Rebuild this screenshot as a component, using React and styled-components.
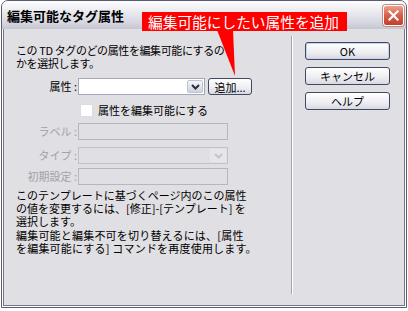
import React from "react";
import styled, { createGlobalStyle } from "styled-components";

const GlobalStyle = createGlobalStyle`
  html, body {
    margin: 0;
    padding: 0;
    background: #ffffff;
  }
  body {
    font-family: "Noto Sans CJK JP", "Noto Sans", sans-serif;
  }
`;

const Window = styled.div`
  position: relative;
  box-sizing: border-box;
  width: 406px;
  height: 308px;
  margin-left: 1px;
  border: 1px solid #5c5c70;
  border-radius: 7px 7px 0 0;
  background: #e0dfe3;
  display: flex;
  flex-direction: column;
`;

const TitleBar = styled.div`
  flex: none;
  height: 28px;
  display: flex;
  align-items: center;
  justify-content: space-between;
  padding: 0 2px 0 5px;
  border-radius: 6px 6px 0 0;
  background: linear-gradient(#fdfdfe, #ececf1 35%, #d8d8e2 75%, #c6c6d3);
`;

const Title = styled.div`
  font-size: 13px;
  font-weight: bold;
  color: #000;
`;

const CloseButton = styled.div`
  box-sizing: border-box;
  width: 21px;
  height: 21px;
  border: 1px solid #ffffff;
  border-radius: 3px;
  box-shadow: 0 0 0 1px #c48a80;
  background: linear-gradient(#eaa08f, #d75f48 50%, #c0402a);
  display: flex;
  align-items: center;
  justify-content: center;
`;

const Body = styled.div`
  flex: 1;
  display: flex;
  border: 1px solid #ffffff;
  border-top: none;
  box-shadow: inset 1px 0 0 #77778a, inset -1px 0 0 #77778a,
    inset 0 -1px 0 #77778a;
`;

const LeftPane = styled.div`
  box-sizing: border-box;
  width: 288px;
  padding: 15px 0 0 13px;
  display: flex;
  flex-direction: column;
`;

const Separator = styled.div`
  width: 0;
  margin: 7px 0 12px;
  border-left: 1px solid #a4a4b0;
  border-right: 1px solid #ffffff;
`;

const RightPane = styled.div`
  padding: 13px 0 0 12px;
  display: flex;
  flex-direction: column;
  gap: 7px;
`;

const Paragraph = styled.p`
  margin: ${(p) => p.$mt}px 0 0;
  font-size: 11px;
  line-height: 13px;
  letter-spacing: ${(p) => p.$ls || 0}px;
  color: #000;
  white-space: nowrap;
`;

const FormRow = styled.div`
  display: grid;
  grid-template-columns: 62px auto;
  align-items: center;
  height: ${(p) => p.$h || 17}px;
  margin-top: ${(p) => p.$mt}px;
`;

const FieldLabel = styled.span`
  text-align: right;
  padding-right: 1px;
  font-size: 11px;
  line-height: 13px;
  color: ${(p) => (p.$disabled ? "#a2a2a6" : "#000")};
`;

const Controls = styled.div`
  display: flex;
  align-items: center;
  gap: ${(p) => p.$gap || 3}px;
`;

const ComboBox = styled.div`
  box-sizing: border-box;
  width: ${(p) => p.$w}px;
  height: 17px;
  padding: 1px;
  display: flex;
  justify-content: flex-end;
  border: 1px solid ${(p) => (p.$disabled ? "#c2c1c8" : "#a3aab7")};
  background: ${(p) => (p.$disabled ? "#e0dfe3" : "#ffffff")};
`;

const DropArrow = styled.span`
  box-sizing: border-box;
  width: 16px;
  height: 13px;
  border-radius: 2px;
  display: flex;
  align-items: center;
  justify-content: center;
  border: 1px solid ${(p) => (p.$disabled ? "#e8e8ec" : "#bcc3d3")};
  background: ${(p) =>
    p.$disabled
      ? "#e6e6ea"
      : "linear-gradient(#f4f5f9, #dfe2ea 60%, #cdd1dc)"};
`;

const TextBox = styled.div`
  box-sizing: border-box;
  width: 150px;
  height: 17px;
  border: 1px solid #b7b6bd;
  background: #e0dfe3;
`;

const Checkbox = styled.span`
  box-sizing: border-box;
  width: 13px;
  height: 13px;
  margin-left: 2px;
  border: 1px solid #dcdce2;
  background: #ffffff;
`;

const CheckText = styled.span`
  font-size: 11px;
  line-height: 13px;
  color: #000;
`;

const XpButton = styled.button`
  box-sizing: border-box;
  width: ${(p) => p.$w}px;
  height: ${(p) => p.$h || 18}px;
  padding: 0;
  border: 1px solid #3e4a62;
  border-radius: 3px;
  background: linear-gradient(#ffffff, #efeff3 55%, #d9d8e1);
  box-shadow: ${(p) => (p.$default ? "inset 0 0 0 1px #c7d3ea" : "none")};
  font-family: "Noto Sans CJK JP", "Noto Sans", sans-serif;
  font-size: 11px;
  line-height: 14px;
  color: #000;
`;

const Callout = styled.div`
  position: absolute;
  left: 140px;
  top: 11px;
  width: 205px;
  height: 19px;
  background: #ff0000;
  color: #ffffff;
  font-size: 14.7px;
  line-height: 19px;
  padding-left: 6px;
  box-sizing: border-box;
  white-space: nowrap;
`;

const CalloutTail = styled.svg`
  position: absolute;
  left: 214px;
  top: 29px;
  overflow: visible;
`;

function Chevron({ color }) {
  return (
    <svg width="9" height="6" viewBox="0 0 9 6">
      <path d="M1 1 L4.5 4.5 L8 1" fill="none" stroke={color} strokeWidth="2" />
    </svg>
  );
}

export default function App() {
  return (
    <>
      <GlobalStyle />
      <Window>
        <TitleBar>
          <Title>編集可能なタグ属性</Title>
          <CloseButton>
            <svg width="11" height="11" viewBox="0 0 11 11">
              <path
                d="M1.5 1.5 L9.5 9.5 M9.5 1.5 L1.5 9.5"
                stroke="#ffffff"
                strokeWidth="2.2"
                strokeLinecap="square"
              />
            </svg>
          </CloseButton>
        </TitleBar>
        <Body>
          <LeftPane>
            <Paragraph $mt={0} $ls={-0.4}>
              この TD タグのどの属性を編集可能にするの
              <br />
              かを選択します。
            </Paragraph>
            <FormRow $mt={8}>
              <FieldLabel>属性 :</FieldLabel>
              <Controls>
                <ComboBox $w={127}>
                  <DropArrow>
                    <Chevron color="#2b2f3a" />
                  </DropArrow>
                </ComboBox>
                <XpButton $w={44} $h={17}>
                  追加...
                </XpButton>
              </Controls>
            </FormRow>
            <FormRow $mt={9} $h={13}>
              <span />
              <Controls $gap={5}>
                <Checkbox />
                <CheckText>属性を編集可能にする</CheckText>
              </Controls>
            </FormRow>
            <FormRow $mt={6}>
              <FieldLabel $disabled>ラベル :</FieldLabel>
              <TextBox />
            </FormRow>
            <FormRow $mt={7}>
              <FieldLabel $disabled>タイプ :</FieldLabel>
              <ComboBox $w={150} $disabled>
                <DropArrow $disabled>
                  <Chevron color="#c4c4ca" />
                </DropArrow>
              </ComboBox>
            </FormRow>
            <FormRow $mt={4}>
              <FieldLabel $disabled>初期設定 :</FieldLabel>
              <TextBox />
            </FormRow>
            <Paragraph $mt={4}>
              このテンプレートに基づくページ内のこの属性
              <br />
              の値を変更するには、[修正]-[テンプレート] を
              <br />
              選択します。
            </Paragraph>
            <Paragraph $mt={1} $ls={0.2}>
              編集可能と編集不可を切り替えるには、[属性
              <br />
              を編集可能にする] コマンドを再度使用します。
            </Paragraph>
          </LeftPane>
          <Separator />
          <RightPane>
            <XpButton $w={85} $default>
              OK
            </XpButton>
            <XpButton $w={85}>キャンセル</XpButton>
            <XpButton $w={85}>ヘルプ</XpButton>
          </RightPane>
        </Body>
        <Callout>編集可能にしたい属性を追加</Callout>
        <CalloutTail width="20" height="46" viewBox="0 0 20 46">
          <polygon points="1,0 17,0 19,46" fill="#ff0000" />
        </CalloutTail>
      </Window>
    </>
  );
}
